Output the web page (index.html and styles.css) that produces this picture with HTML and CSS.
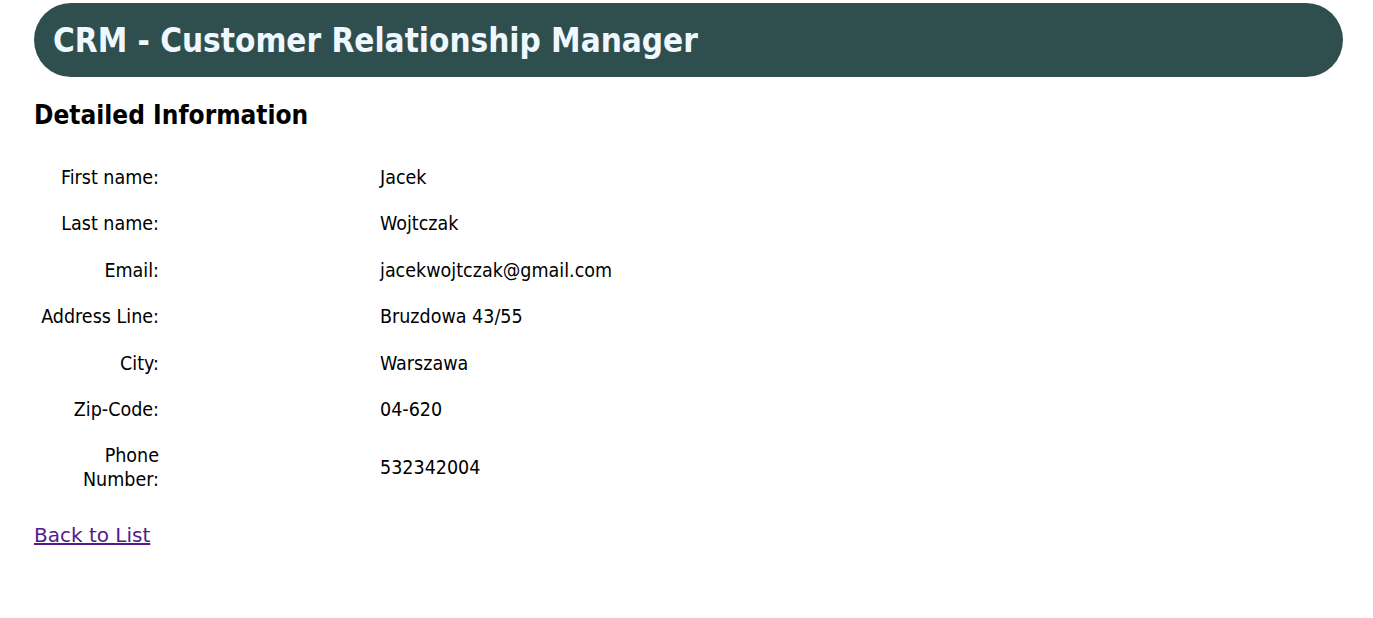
FILE: index.html
```html
<!DOCTYPE html>
<html>
<head>
<meta charset="utf-8">
<link rel="stylesheet" href="styles.css">
</head>
<body>
<div class="page">
  <header class="banner"><h1 class="banner-title">CRM - Customer Relationship Manager</h1></header>
  <h2 class="section-title">Detailed Information</h2>
  <dl class="details">
    <dt>First name:</dt><dd>Jacek</dd>
    <dt>Last name:</dt><dd>Wojtczak</dd>
    <dt>Email:</dt><dd>jacekwojtczak@gmail.com</dd>
    <dt>Address Line:</dt><dd>Bruzdowa 43/55</dd>
    <dt>City:</dt><dd>Warszawa</dd>
    <dt>Zip-Code:</dt><dd>04-620</dd>
    <dt>Phone Number:</dt><dd>532342004</dd>
  </dl>
  <a class="back-link" href="#">Back to List</a>
</div>
</body>
</html>
```
FILE: styles.css
```css
html, body { margin: 0; padding: 0; background: #fff; }
body { font-family: "DejaVu Sans Condensed", "DejaVu Sans", sans-serif; color: #000; }
.page { padding: 3px 30px 0 34px; }
.banner {
  background: #2f4f4f;
  height: 74px;
  border-radius: 37px;
  display: flex;
  align-items: center;
  padding: 0 19px;
}
.banner-title {
  margin: 0;
  color: #f0f8ff;
  font-size: 33px;
  font-weight: bold;
  line-height: 40px;
  padding-top: 2px;
}
.section-title {
  margin: 22px 0 0 0;
  font-size: 26px;
  font-weight: bold;
  line-height: 32px;
}
.details {
  display: grid;
  grid-template-columns: 125px 1fr;
  column-gap: 221px;
  row-gap: 22.4px;
  margin: 35px 0 0 0;
  font-size: 19.5px;
  line-height: 24px;
}
.details dt { text-align: right; align-self: center; }
.details dd { margin: 0; align-self: center; }
.back-link {
  display: inline-block;
  margin-top: 31px;
  font-family: "DejaVu Sans", sans-serif;
  font-size: 20px;
  line-height: 24px;
  color: #551a8b;
}
```
